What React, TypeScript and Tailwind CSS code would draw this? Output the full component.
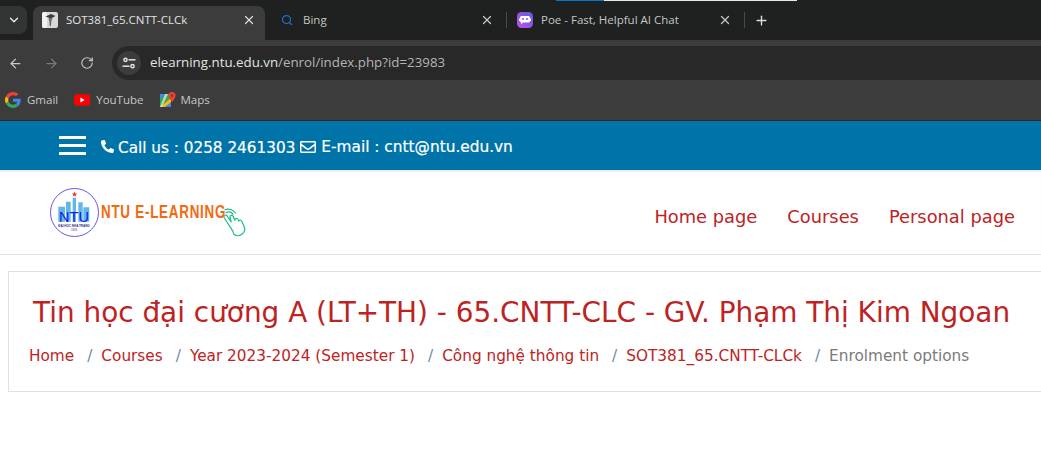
import React from "react";
import { ArrowLeft, ArrowRight, ChevronDown, Plus, RotateCw, Search, X } from "lucide-react";
import { FaPhoneAlt, FaRegEnvelope } from "react-icons/fa";

function GoogleIcon() {
    return (
        <svg width="16" height="16" viewBox="0 0 48 48">
            <path fill="#EA4335" d="M24 9.500c3.500 0 6.700 1.200 9.200 3.600l6.900-6.900C35.900 2.400 30.500 0 24 0 14.600 0 6.500 5.400 2.600 13.200l8 6.200C12.500 13.700 17.800 9.500 24 9.500z" />
            <path fill="#4285F4" d="M47 24.500c0-1.600-.1-3.100-.4-4.500H24v9h12.900c-.6 3-2.200 5.500-4.700 7.200l7.700 6c4.500-4.200 7.100-10.300 7.100-17.700z" />
            <path fill="#FBBC05" d="M10.600 28.600c-.5-1.400-.8-3-.8-4.600s.3-3.200.8-4.600l-8-6.200C.9 16.500 0 20.100 0 24s.9 7.500 2.600 10.800l8-6.200z" />
            <path fill="#34A853" d="M24 48c6.500 0 11.900-2.100 15.900-5.800l-7.700-6c-2.200 1.500-5 2.300-8.200 2.300-6.200 0-11.500-4.200-13.400-9.900l-8 6.200C6.500 42.600 14.600 48 24 48z" />
        </svg>
    );
}

function YoutubeIcon() {
    return (
        <svg width="16" height="12" viewBox="0 0 16 12">
            <rect width="16" height="11.500" y="0.250" rx="3" fill="#FF0000" />
            <path d="M6.400 3.500 10.600 6 6.400 8.500z" fill="#fff" />
        </svg>
    );
}

function MapsIcon() {
    return (
        <svg width="16" height="16" viewBox="0 0 16 16">
            <path d="M0 2h11v13H0z" fill="#34A853" />
            <path d="M0 15 11 6v9z" fill="#FBBC05" />
            <path d="M5 15 11 10v5z" fill="#4285F4" />
            <path d="M0 2h5L0 7z" fill="#4285F4" />
            <path d="M5 2h3L2 15H0z" fill="#e8eaed" opacity="0.75" />
            <path d="M12 0a3.600 3.600 0 0 0-3.600 3.600C8.400 6.200 12 10 12 10s3.600-3.800 3.600-6.400A3.600 3.600 0 0 0 12 0z" fill="#EA4335" />
            <circle cx="12" cy="3.600" r="1.300" fill="#A5281B" />
        </svg>
    );
}

function PoeIcon() {
    return (
        <svg width="16" height="16" viewBox="0 0 16 16">
            <defs>
                <linearGradient id="poe" x1="0" y1="1" x2="1" y2="0">
                    <stop offset="0" stopColor="#c34df0" />
                    <stop offset="1" stopColor="#5a5fdc" />
                </linearGradient>
            </defs>
            <rect width="16" height="16" rx="4.500" fill="url(#poe)" />
            <path d="M2 6.500 3 6.500V5.500A1.500 1.500 0 0 1 4.500 4h7A1.500 1.500 0 0 1 13 5.500V6.500h1v2.500h-1a1.500 1.500 0 0 1-1.500 1.500H6L4 12.500v-2A1.500 1.500 0 0 1 3 9H2z" fill="#fff" />
            <rect x="4.800" y="6.200" width="2.300" height="1.600" rx="0.500" fill="#9050e6" />
            <rect x="8.900" y="6.200" width="2.300" height="1.600" rx="0.500" fill="#9050e6" />
        </svg>
    );
}

function CourseFavicon() {
    return (
        <svg width="16" height="16" viewBox="0 0 16 16">
            <rect width="16" height="16" rx="2" fill="#d9d9d9" />
            <rect width="5" height="16" rx="2" fill="#f2f2f2" />
            <path d="M3.500 4.500 9 2l4.500 2L9 6.500z" fill="#3d3d3d" />
            <path d="M6.500 6h4l-1 3-.6 5H7.600L7.200 9z" fill="#707070" />
        </svg>
    );
}

function TuneIcon() {
    return (
        <svg width="14" height="14" viewBox="0 0 14 14" fill="none" stroke="#e3e3e3" strokeWidth="1.500">
            <circle cx="3.500" cy="3.800" r="1.600" />
            <path d="M6.500 3.800H13.500" />
            <circle cx="10.500" cy="10.200" r="1.600" />
            <path d="M0.500 10.200H7.500" />
        </svg>
    );
}

function NtuLogo() {
    return (
        <svg width="49" height="49" viewBox="0 0 49 49">
            <circle cx="24.500" cy="24.500" r="24" fill="#fff" stroke="#5b3fe0" strokeWidth="0.900" />
            <path d="M24.500 3.500l.8 2h2.100l-1.700 1.300.6 2-1.800-1.200-1.800 1.200.6-2-1.700-1.300h2.100z" fill="#e8392b" />
            <path d="M8.300 18.700H15V33.700H8.300zM16 13.700h4.700V33.700H16zM22.700 9.700H26V33.700H22.700zM28.300 14.300h4.400V33.700H28.300zM33.300 19.300h6V33.700h-6z" fill="#5fb8e8" />
            <text x="24" y="34" textAnchor="middle" fontSize="14.500" fill="#1616e6" fontFamily="Liberation Sans, sans-serif">NTU</text>
            <text x="24" y="38.500" textAnchor="middle" fontSize="3" fontWeight="700" fill="#2a2a8a" fontFamily="Liberation Sans, sans-serif">ĐẠI HỌC NHA TRANG</text>
            <text x="24" y="43" textAnchor="middle" fontSize="2.800" fill="#2a2a8a" fontFamily="Liberation Sans, sans-serif">1959</text>
        </svg>
    );
}

function HandIcon() {
    return (
        <svg width="27" height="31" viewBox="0 0 27 31" fill="none" stroke="#1dbf85" strokeWidth="1.200" strokeLinecap="round" strokeLinejoin="round">
            <path d="M4 4.500A6 6 0 0 1 11 6" />
            <path d="M3 1.800A9 9 0 0 1 13.500 5" />
            <path d="M2 9.500a1.800 1.800 0 0 1 3.200-1.500l4 6-1.200-5a1.700 1.700 0 0 1 3.200-.8l1.500 4 .4-1a1.700 1.700 0 0 1 3 .4l.6 1.500.6-.6c.9-.6 2-.2 2.500.7l2.400 5.500c1 2.600.3 5.500-2 7.300-2.500 1.900-6 2.100-8.300.3L11 23.300z" />
        </svg>
    );
}

function Tab({ icon, title, className, closeClass }: { icon: React.ReactNode; title: string; className: string; closeClass: string }) {
    return (
        <div className={`relative flex h-[34px] items-center pb-[6px] ${className}`}>
            <div className="flex w-[16px] justify-center">{icon}</div>
            <span className="ml-[8px] whitespace-nowrap text-[11.500px]">{title}</span>
            <X className={`absolute top-[7px] h-[14px] w-[14px] ${closeClass}`} strokeWidth={2.2} />
        </div>
    );
}

function Crumb({ children, last }: { children: React.ReactNode; last?: boolean }) {
    return (
        <>
            <a className={last ? "text-[#7a7a7a]" : "text-[#bd2323]"}>{children}</a>
            {!last && <span className="ml-[13px] mr-[9px] text-[#6d8aa5]">/</span>}
        </>
    );
}

export default function App() {
    return (
        <div className="relative h-[460px] w-[1041px] overflow-hidden bg-white font-['DejaVu_Sans',Verdana,sans-serif]">
            <div className="absolute left-[556px] top-0 z-10 flex h-[1px] w-[241px]">
                <div className="w-[48px] bg-[#0078d4]" />
                <div className="flex-1 bg-[#e8e8e8]" />
            </div>

            {/* browser chrome */}
            <div className="font-['Open_Sans','Noto_Sans',sans-serif]">
                <div className="flex h-[40px] items-end bg-[#1f2020]">
                    <div className="mb-[6px] flex h-[28px] w-[27px] items-center justify-center rounded-r-lg bg-[#333535] text-[#e3e3e3]">
                        <ChevronDown className="h-[14px] w-[14px]" strokeWidth={2.5} />
                    </div>
                    <div className="ml-[6px] flex items-center">
                        <Tab
                            className="w-[232px] rounded-t-lg bg-[#3c3c3c] pl-[9px] text-[#e3e3e3]"
                            icon={<CourseFavicon />}
                            title="SOT381_65.CNTT-CLCk"
                            closeClass="left-[209px] text-[#dadada]"
                        />
                        <Tab
                            className="w-[241px] pl-[14px] text-[#c4c7c5]"
                            icon={<Search className="h-[12px] w-[12px] text-[#1a73c9]" strokeWidth={2.5} />}
                            title="Bing"
                            closeClass="left-[215px] text-[#c4c7c5]"
                        />
                        <div className="mb-[6px] h-[16px] w-px bg-[#4a4a4a]" />
                        <Tab
                            className="w-[237px] pl-[10px] text-[#c4c7c5]"
                            icon={<PoeIcon />}
                            title="Poe - Fast, Helpful AI Chat"
                            closeClass="left-[211px] text-[#c4c7c5]"
                        />
                        <div className="mb-[6px] h-[16px] w-px bg-[#4a4a4a]" />
                        <Plus className="mb-[6px] ml-[9px] h-[15px] w-[15px] text-[#dcdcdc]" strokeWidth={2.2} />
                    </div>
                </div>

                <div className="flex h-[43px] items-start bg-[#3c3c3c] pt-[6px] text-[#c7c7c7]">
                    <div className="flex h-[34px] items-center">
                        <ArrowLeft className="ml-[8px] h-[15px] w-[15px]" strokeWidth={2} />
                        <ArrowRight className="ml-[21px] h-[15px] w-[15px] text-[#7b7b7b]" strokeWidth={2} />
                        <RotateCw className="ml-[21px] h-[14px] w-[14px]" strokeWidth={2} />
                    </div>
                    <div className="ml-[18px] flex h-[34px] flex-1 items-center rounded-l-full bg-[#282828]">
                        <div className="ml-[5px] flex h-[24px] w-[24px] items-center justify-center rounded-full bg-[#3c3c3c]">
                            <TuneIcon />
                        </div>
                        <span className="ml-[9px] text-[13.300px] text-[#e3e3e3]">
                            elearning.ntu.edu.vn<span className="text-[#b4b4b4]">/enrol/index.php?id=23983</span>
                        </span>
                    </div>
                </div>

                <div className="flex h-[38px] items-center gap-[16px] border-b border-[#2a2a2a] bg-[#3c3c3c] pb-[4px] pl-[5px] text-[11.500px] text-[#c7c7c7]">
                    <div className="flex items-center gap-[6px]"><GoogleIcon /><span>Gmail</span></div>
                    <div className="flex items-center gap-[6px]"><YoutubeIcon /><span>YouTube</span></div>
                    <div className="flex items-center gap-[5px]"><MapsIcon /><span>Maps</span></div>
                </div>
            </div>

            {/* site top bar */}
            <div className="flex h-[49px] items-center bg-[#0073a8] pl-[59px] text-white">
                <div className="flex w-[27px] flex-col gap-[5px]">
                    <div className="h-[3px] bg-white" />
                    <div className="h-[3px] bg-white" />
                    <div className="h-[3px] bg-white" />
                </div>
                <FaPhoneAlt className="ml-[15px] mt-[2px] h-[13px] w-[13px]" />
                <span className="ml-[4px] pt-[5px] text-[15.250px] [-webkit-text-stroke:0.2px_white]">Call us : 0258 2461303</span>
                <FaRegEnvelope className="ml-[5px] mt-[2px] h-[16px] w-[16px]" />
                <span className="ml-[5px] pt-[5px] text-[15.350px] [-webkit-text-stroke:0.2px_white]">E-mail : cntt@ntu.edu.vn</span>
            </div>

            {/* site header */}
            <div className="flex h-[85px] items-center justify-between border-b border-[#e3e3e3] pr-[26px] shadow-[inset_0_3px_3px_-2px_rgba(0,0,0,0.12)]">
                <div className="ml-[50px] flex items-center">
                    <NtuLogo />
                    <div className="ml-[2px] w-[124px]">
                        <div className="origin-left scale-x-[0.745] whitespace-nowrap font-['Liberation_Sans',sans-serif] text-[18px] font-bold tracking-[1px] text-[#f26a0f]">NTU E-LEARNING</div>
                    </div>
                    <div className="-ml-[3px] mt-[22px]"><HandIcon /></div>
                </div>
                <nav className="mt-[10px] flex gap-[30px] text-[17.850px] text-[#bd2323]">
                    <a>Home page</a>
                    <a>Courses</a>
                    <a>Personal page</a>
                </nav>
            </div>

            {/* page heading card */}
            <div className="ml-[8px] mt-[16px] h-[121px] w-[1040px] border border-[#e0e0e0] pl-[24px] pt-[21px]">
                <h1 className="whitespace-nowrap text-[27.900px] leading-[40px] text-[#bd2323]">Tin học đại cương A (LT+TH) - 65.CNTT-CLC - GV. Phạm Thị Kim Ngoan</h1>
                <div className="-ml-[4px] mt-[12px] whitespace-nowrap text-[15.300px]">
                    <Crumb>Home</Crumb>
                    <Crumb>Courses</Crumb>
                    <Crumb>Year 2023-2024 (Semester 1)</Crumb>
                    <Crumb>Công nghệ thông tin</Crumb>
                    <Crumb>SOT381_65.CNTT-CLCk</Crumb>
                    <Crumb last>Enrolment options</Crumb>
                </div>
            </div>
        </div>
    );
}
